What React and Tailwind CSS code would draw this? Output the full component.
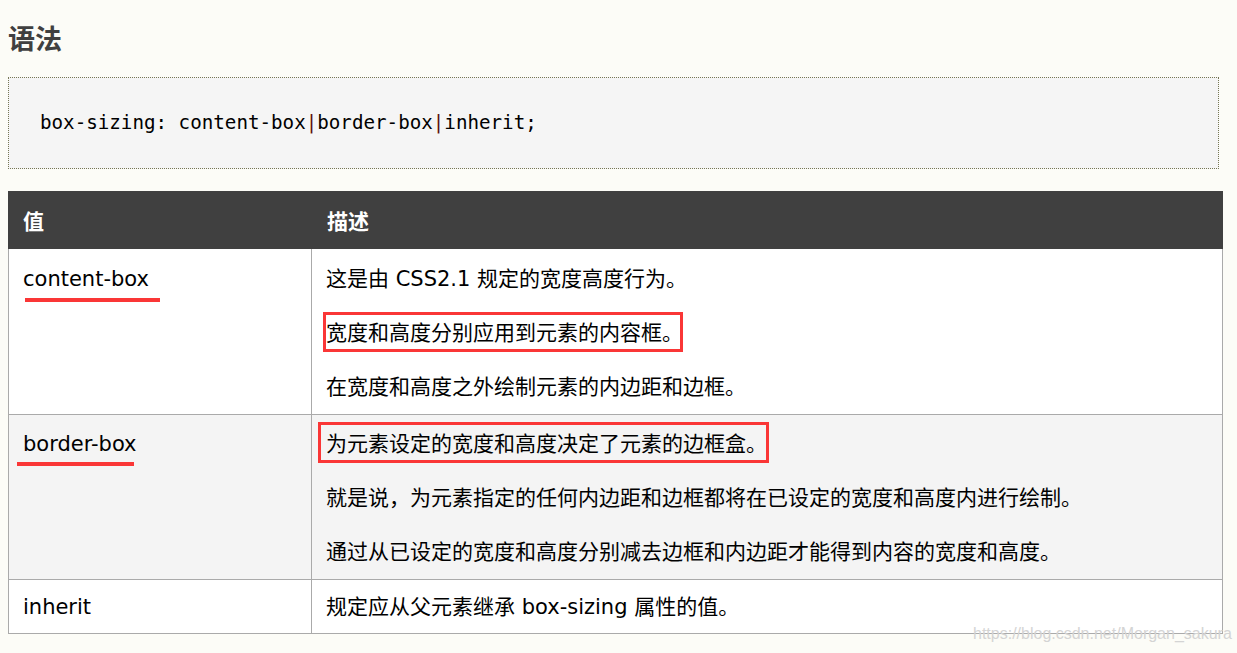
export default function App() {
  const cjk = { fontFamily: '"DejaVu Sans", "Noto Sans CJK SC", sans-serif' };
  return (
    <div className="relative min-h-[653px] w-[1237px] bg-[#fcfcf7] pl-[8px] pt-[19px]" style={cjk}>
      <h2
        className="h-[38px] text-[27px] font-bold leading-[38px] text-[#404040]"
        style={{ fontFamily: '"Noto Sans CJK SC", sans-serif' }}
      >
        语法
      </h2>

      <div className="mt-[20px] flex h-[92px] w-[1211px] items-center border border-dotted border-[#777755] bg-[#f5f5f5] pl-[31px]">
        <code
          className="text-[19.2px] leading-[24px] text-black"
          style={{ fontFamily: '"DejaVu Sans Mono", "Liberation Mono", monospace' }}
        >
          box-sizing: content-box<span className="text-[#5e1208]">|</span>border-box
          <span className="text-[#5e1208]">|</span>inherit;
        </code>
      </div>

      <div className="mt-[22px] w-[1215px] text-[21px] text-black">
        <div className="grid h-[58px] grid-cols-[304px_911px] bg-[#404040] text-[21px] font-bold text-white">
          <div className="pl-[15px] leading-[58px]" style={{ fontFamily: '"Noto Sans CJK SC", sans-serif' }}>值</div>
          <div className="pl-[15px] leading-[58px]" style={{ fontFamily: '"Noto Sans CJK SC", sans-serif' }}>描述</div>
        </div>

        <div className="grid grid-cols-[304px_911px] border-b border-[#aaaaaa] bg-white">
          <div className="border-x border-[#aaaaaa] px-[14px] pt-[15px] leading-[30px]">content-box</div>
          <div className="flex flex-col gap-[24px] border-r border-[#aaaaaa] px-[14px] pb-[12px] pt-[15px] leading-[30px]">
            <p>这是由 CSS2.1 规定的宽度高度行为。</p>
            <p>宽度和高度分别应用到元素的内容框。</p>
            <p>在宽度和高度之外绘制元素的内边距和边框。</p>
          </div>
        </div>

        <div className="grid grid-cols-[304px_911px] border-b border-[#aaaaaa] bg-[#f4f4f4]">
          <div className="border-x border-[#aaaaaa] px-[14px] pt-[14px] leading-[30px]">border-box</div>
          <div className="flex flex-col gap-[24px] border-r border-[#aaaaaa] px-[14px] pb-[12px] pt-[14px] leading-[30px]">
            <p>为元素设定的宽度和高度决定了元素的边框盒。</p>
            <p>就是说，为元素指定的任何内边距和边框都将在已设定的宽度和高度内进行绘制。</p>
            <p>通过从已设定的宽度和高度分别减去边框和内边距才能得到内容的宽度和高度。</p>
          </div>
        </div>

        <div className="grid grid-cols-[304px_911px] border-b border-[#aaaaaa] bg-white">
          <div className="border-x border-[#aaaaaa] px-[14px] pb-[11px] pt-[12px] leading-[30px]">inherit</div>
          <div className="border-r border-[#aaaaaa] px-[14px] pb-[11px] pt-[12px] leading-[30px]">
            规定应从父元素继承 box-sizing 属性的值。
          </div>
        </div>
      </div>

      {/* red annotations */}
      <div className="absolute left-[25px] top-[298px] h-[4px] w-[135px] bg-[#fa3636]" />
      <div className="absolute left-[323px] top-[312px] h-[40px] w-[360px] border-[3px] border-[#fa3636]" />
      <div className="absolute left-[17px] top-[462px] h-[4px] w-[117px] bg-[#fa3636]" />
      <div className="absolute left-[318px] top-[422px] h-[41px] w-[451px] border-[3px] border-[#fa3636]" />

      {/* watermark */}
      <div
        className="absolute left-[973px] top-[624px] text-[16px] leading-[20px] text-[#d4d4d4]"
        style={{ fontFamily: '"Liberation Sans", Arial, sans-serif' }}
      >
        https://blog.csdn.net/Morgan_sakura
      </div>
    </div>
  );
}
